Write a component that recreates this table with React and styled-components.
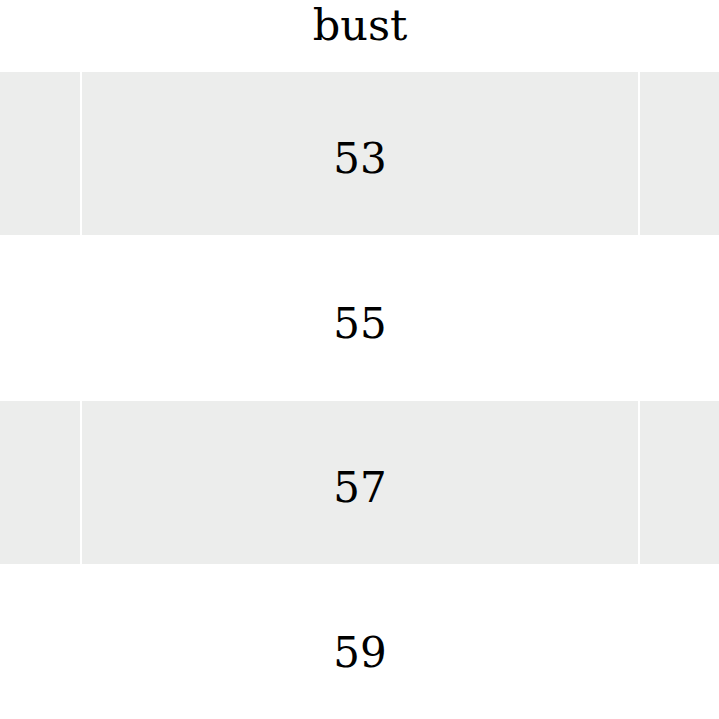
import styled, { createGlobalStyle } from "styled-components";

const GlobalStyle = createGlobalStyle`
  html, body {
    margin: 0;
    padding: 0;
    background: #ffffff;
  }
`;

const Table = styled.div`
  display: grid;
  grid-template-columns: 80px 556px 1fr;
  column-gap: 2px;
  width: 719px;
  overflow: hidden;
  font-family: "DejaVu Serif", "Liberation Serif", serif;
  color: #000;
`;

const HeadCell = styled.div`
  height: 72px;
  display: flex;
  justify-content: center;
  align-items: flex-start;
  font-size: 43px;
  line-height: normal;
  box-sizing: border-box;
`;

const Cell = styled.div`
  height: ${(p) => (p.$striped ? 163 : 166)}px;
  display: flex;
  justify-content: center;
  align-items: center;
  padding-top: 10px;
  box-sizing: border-box;
  font-size: 42px;
  background: ${(p) => (p.$striped ? "#ecedec" : "#ffffff")};
`;

const rows = [53, 55, 57, 59];

function App() {
  return (
    <>
      <GlobalStyle />
      <Table>
        <HeadCell />
        <HeadCell>bust</HeadCell>
        <HeadCell />
        {rows.map((value, idx) => (
          <>
            <Cell key={`a${idx}`} $striped={idx % 2 === 0} />
            <Cell key={`b${idx}`} $striped={idx % 2 === 0}>
              {value}
            </Cell>
            <Cell key={`c${idx}`} $striped={idx % 2 === 0} />
          </>
        ))}
      </Table>
    </>
  );
}

export default App;
